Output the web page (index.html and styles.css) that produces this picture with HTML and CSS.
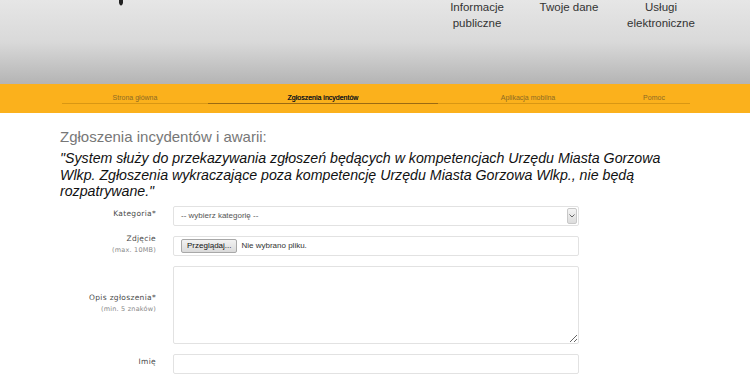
FILE: index.html
```html
<!DOCTYPE html>
<html lang="pl">
<head>
  <meta charset="UTF-8" />
  <meta name="viewport" content="width=device-width, initial-scale=1.0"/>
  <title>Zgłoszenia incydentów</title>
  <link rel="stylesheet" href="styles.css">
</head>
<body>
  <header class="top">
    <div class="top-inner">
      <div class="logo">
        <svg width="8" height="6" viewBox="0 0 8 6"><path d="M2 0h4v2.5c0 1.5-1 3-2 3s-2-1.5-2-3z" fill="#222"/></svg>
      </div>
      <nav class="main-nav">
        <a href="#">Informacje publiczne</a>
        <a href="#">Twoje dane</a>
        <a href="#">Usługi elektroniczne</a>
      </nav>
    </div>
  </header>

  <div class="subbar">
    <nav class="sub-nav">
      <a href="#" class="w1">Strona główna</a>
      <a href="#" class="w2 active">Zgłoszenia incydentów</a>
      <a href="#" class="w3">Aplikacja mobilna</a>
      <a href="#" class="w4">Pomoc</a>
    </nav>
  </div>

  <main class="content">
    <h2>Zgłoszenia incydentów i awarii:</h2>
    <p class="quote">"System służy do przekazywania zgłoszeń będących w kompetencjach Urzędu Miasta Gorzowa Wlkp. Zgłoszenia wykraczające poza kompetencję Urzędu Miasta Gorzowa Wlkp., nie będą rozpatrywane."</p>

    <form class="form">
      <div class="row">
        <label class="lbl">Kategoria*</label>
        <div class="field select">
          <span>-- wybierz kategorię --</span>
          <span class="arrow"><svg width="6" height="4" viewBox="0 0 6 4"><path d="M0.5 0.5L3 3L5.5 0.5" fill="none" stroke="#666" stroke-width="1"/></svg></span>
        </div>
      </div>
      <div class="row">
        <label class="lbl">Zdjęcie<small>(max. 10MB)</small></label>
        <div class="field file">
          <span class="btn">Przeglądaj...</span>
          <span>Nie wybrano pliku.</span>
        </div>
      </div>
      <div class="row">
        <label class="lbl">Opis zgłoszenia*<small>(min. 5 znaków)</small></label>
        <textarea class="field area"></textarea>
      </div>
      <div class="row">
        <label class="lbl">Imię</label>
        <input class="field" type="text">
      </div>
    </form>
  </main>
</body>
</html>
```

FILE: styles.css
```css
/* Base */
body {
  margin: 0;
  font-family: 'Liberation Sans', Arial, sans-serif;
  background: #fff;
  color: #333;
  overflow: hidden;
}

a {
  text-decoration: none;
}

/* Header */
.top {
  height: 84px;
  background: linear-gradient(#e6e6e6, #d9d9d9 50%, #b4b4b4);
  overflow: hidden;
}

.top-inner {
  display: flex;
}

.logo {
  width: 431px;
  padding-left: 117px;
  box-sizing: border-box;
  line-height: 0;
}

.main-nav {
  display: flex;
  margin-top: -1px;
}

.main-nav a {
  width: 92px;
  text-align: center;
  font-size: 11.5px;
  line-height: 16px;
  color: #333;
}

/* Orange bar */
.subbar {
  height: 29px;
  background: #fbb11c;
}

.sub-nav {
  display: flex;
  padding-left: 62px;
}

.sub-nav a {
  padding-top: 9px;
  line-height: 10px;
  font-size: 7px;
  text-align: center;
  color: #8d6a24;
  border-bottom: 1px solid #d99713;
}

.sub-nav a.active {
  color: #1a1a1a;
  border-bottom-color: #9b6a12;
  text-shadow: 0 0 0.4px #1a1a1a;
}

.w1 { width: 146px; }
.w2 { width: 230px; }
.w3 { width: 180px; }
.w4 { width: 72px; }

/* Content */
.content {
  padding: 0 60px;
}

.content h2 {
  margin: 0;
  padding-top: 15px;
  font-size: 15px;
  line-height: 18px;
  font-weight: normal;
  color: #777;
}

.quote {
  max-width: 620px;
  margin: 4px 0 0;
  font-size: 14.2px;
  line-height: 16.5px;
  font-style: italic;
  color: #111;
}

.form {
  margin-top: 6px;
  display: flex;
  flex-direction: column;
  gap: 10px;
}

.row {
  display: flex;
  align-items: center;
  gap: 17px;
}

.lbl {
  width: 96px;
  text-align: right;
  font-family: 'DejaVu Sans', Verdana, sans-serif;
  font-size: 7.5px;
  letter-spacing: 0.3px;
  color: #4a4a4a;
  line-height: 10px;
  margin-top: -3px;
}

.lbl small {
  display: block;
  font-size: 6.5px;
  letter-spacing: 0.2px;
  color: #888;
  margin-top: 1px;
}

.field {
  width: 406px;
  height: 20px;
  box-sizing: border-box;
  border: 1px solid #e2e2e2;
  border-radius: 2px;
  background: #fff;
  font-family: 'Liberation Sans', Arial, sans-serif;
  font-size: 8px;
  color: #555;
  margin: 0;
  padding: 0;
}

.select {
  display: flex;
  align-items: center;
  justify-content: space-between;
  padding: 0 1px 0 7px;
}

.arrow {
  width: 10px;
  height: 16px;
  box-sizing: border-box;
  border: 1px solid #c8c8c8;
  border-radius: 2px;
  background: linear-gradient(#f4f4f4, #dcdcdc);
  display: flex;
  align-items: center;
  justify-content: center;
}

.file {
  display: flex;
  align-items: center;
  gap: 4px;
  padding-left: 7px;
  color: #333;
}

.btn {
  height: 14px;
  line-height: 12px;
  box-sizing: border-box;
  padding: 0 5px;
  border: 1px solid #a8a8a8;
  border-radius: 2px;
  background: linear-gradient(#f2f2f2, #dadada);
  color: #111;
}

.area {
  height: 78px;
  resize: vertical;
}
```
